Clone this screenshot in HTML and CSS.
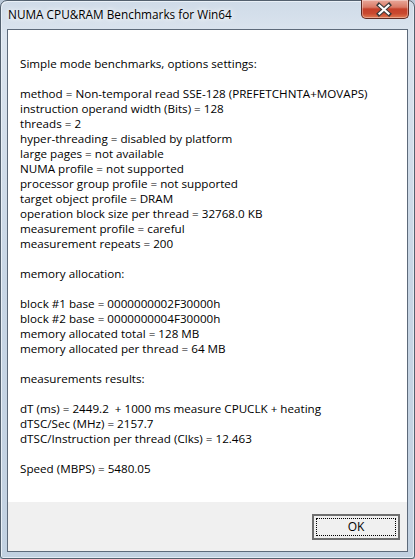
FILE: index.html
```html
<!DOCTYPE html>
<html>
<head>
<meta charset="utf-8">
<title>NUMA CPU&amp;RAM Benchmarks for Win64</title>
<link rel="stylesheet" href="styles.css">
</head>
<body>
<div class="window">
  <div class="titlebar">
    <div class="title">NUMA CPU&amp;RAM Benchmarks for Win64</div>
    <div class="close">
      <svg width="48" height="19" viewBox="0 0 48 19">
        <path d="M19 5 L29 14 M29 5 L19 14" stroke="#3a3a3a" stroke-width="4.2" stroke-linecap="square"/>
        <path d="M19.5 5.5 L28.5 13.5 M28.5 5.5 L19.5 13.5" stroke="#ffffff" stroke-width="2.2" stroke-linecap="square"/>
      </svg>
    </div>
  </div>
  <div class="panel">
    <div class="content">
      <p>Simple mode benchmarks, options settings:</p>
      <p>method = Non-temporal read SSE-128 (PREFETCHNTA+MOVAPS)<br>
      instruction operand width (Bits) = 128<br>
      threads = 2<br>
      hyper-threading = disabled by platform<br>
      large pages = not available<br>
      NUMA profile = not supported<br>
      processor group profile = not supported<br>
      target object profile = DRAM<br>
      operation block size per thread = 32768.0 KB<br>
      measurement profile = careful<br>
      measurement repeats = 200</p>
      <p>memory allocation:</p>
      <p>block #1 base = 0000000002F30000h<br>
      block #2 base = 0000000004F30000h<br>
      memory allocated total = 128 MB<br>
      memory allocated per thread = 64 MB</p>
      <p>measurements results:</p>
      <p>dT (ms) = 2449.2&nbsp; + 1000 ms measure CPUCLK + heating<br>
      dTSC/Sec (MHz) = 2157.7<br>
      dTSC/Instruction per thread (Clks) = 12.463</p>
      <p>Speed (MBPS) = 5480.05</p>
    </div>
    <div class="footer">
      <button class="ok"><span class="focus">OK</span></button>
    </div>
  </div>
</div>
</body>
</html>
```
FILE: styles.css
```css
html, body {
  margin: 0;
  padding: 0;
}
body {
  width: 415px;
  height: 559px;
  overflow: hidden;
  background: #b9c8d8;
}
.window {
  box-sizing: border-box;
  width: 415px;
  height: 559px;
  border: 1px solid #53606e;
  border-radius: 7px 7px 3px 3px;
  background: linear-gradient(180deg, #cfdbe8 0%, #dbe4ee 6%, #c8d6e5 50%, #c2d1e1 100%);
  display: flex;
  flex-direction: column;
  box-shadow: inset 1px 1px 0 #e9f0f7, inset -1px -1px 0 #e3ebf4;
}
.titlebar {
  height: 28px;
  display: flex;
  justify-content: space-between;
  align-items: flex-start;
  padding: 0 5px 0 7px;
  font-family: "Open Sans", "Noto Sans", sans-serif;
  font-size: 11.8px;
  color: #000;
}
.title {
  padding-top: 5px;
  text-shadow: 0 0 8px #ffffff, 0 0 4px #ffffff;
}
.close {
  margin-top: -1px;
  width: 48px;
  height: 19px;
  box-sizing: border-box;
  border: 1px solid #5e2a22;
  border-top: none;
  border-radius: 0 0 5px 5px;
  background: linear-gradient(180deg, #e9a89a 0%, #d97a66 40%, #c5402a 50%, #c9492f 75%, #e07a52 100%);
  box-shadow: inset 0 0 0 1px rgba(255,255,255,0.35);
  display: flex;
  align-items: center;
  justify-content: center;
}
.close svg {
  display: block;
  margin-left: -2px;
}
.panel {
  flex: 1;
  margin: 0 6px 6px 6px;
  border: 1px solid #5d6a7a;
  display: flex;
  flex-direction: column;
  background: #ffffff;
}
.content {
  flex: 1;
  background: #ffffff;
  padding: 26px 12px 0 12px;
  font-family: "Open Sans", "Noto Sans", sans-serif;
  font-size: 11.65px;
  line-height: 15px;
  color: #000;
}
.content p {
  margin: 0 0 15px 0;
  white-space: nowrap;
}
.footer {
  height: 49px;
  background: #f0f0f0;
  display: flex;
  justify-content: flex-end;
  align-items: flex-start;
  padding: 12px 7px 0 0;
  box-sizing: border-box;
}
.ok {
  width: 88px;
  height: 26px;
  box-sizing: border-box;
  margin: 0;
  padding: 2px;
  border: 2px solid #6f6f6f;
  background: #f0f0f0;
  font-family: "Open Sans", "Noto Sans", sans-serif;
  font-size: 12px;
  color: #000;
  display: flex;
}
.focus {
  flex: 1;
  border: 1px dotted #000;
  display: flex;
  align-items: center;
  justify-content: center;
  line-height: 14px;
}
```
